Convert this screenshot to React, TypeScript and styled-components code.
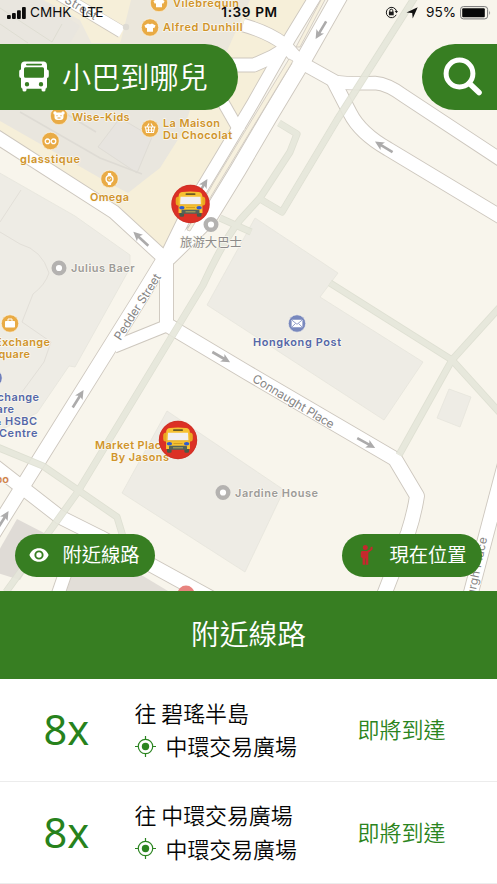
import React from "react";
import styled, { createGlobalStyle } from "styled-components";

const GREEN = "#377e22";
const CJK = `"Noto Sans CJK TC", "Noto Sans", sans-serif`;

const GlobalStyle = createGlobalStyle`
  *, *::before, *::after { box-sizing: border-box; }
  body { margin: 0; background: #fff; overflow: hidden; }
`;

const Screen = styled.main`
  width: 497px;
  height: 884px;
  display: flex;
  flex-direction: column;
  overflow: hidden;
  background: #fff;
  font-family: ${CJK};
`;

const MapArea = styled.section`
  position: relative;
  isolation: isolate;
  height: 591px;
  flex: none;
  display: flex;
  flex-direction: column;
  overflow: hidden;
  background: #f8f5ec;
`;

const MapCanvas = styled.svg`
  position: absolute;
  inset: 0;
  z-index: -1;
  width: 497px;
  height: 591px;
  font-family: Inter, "Noto Sans CJK TC", sans-serif;
`;

const StatusBar = styled.div`
  height: 25px;
  flex: none;
  display: grid;
  grid-template-columns: 1fr auto 1fr;
  align-items: center;
  padding: 0 5px 0 7px;
  color: #0c0c0c;
  font: 400 14px/25px Inter, sans-serif;
`;

const StatusGroup = styled.div<{ $end?: boolean }>`
  display: flex;
  align-items: center;
  justify-content: ${(p) => (p.$end ? "flex-end" : "flex-start")};
`;

const Carrier = styled.span`
  margin-left: 4px;
  font-size: 13.6px;
`;

const Network = styled.span`
  margin-left: 10px;
  font-size: 13.6px;
  letter-spacing: -0.7px;
`;

const Clock = styled.span`
  font-weight: 600;
  font-size: 13.6px;
  letter-spacing: 0.6px;
`;

const Percent = styled.span`
  margin: 0 4px 0 8px;
  font-size: 13.6px;
`;

const TopBar = styled.header`
  margin-top: 18.5px;
  height: 66.5px;
  display: flex;
  justify-content: space-between;
`;

const Brand = styled.h1`
  margin: 0;
  width: 237.5px;
  display: flex;
  align-items: center;
  gap: 13px;
  padding-left: 19px;
  border-radius: 0 34px 34px 0;
  background: ${GREEN};
  color: #fff;
  font-size: 29.2px;
  font-weight: 350;
  line-height: 1;
  white-space: nowrap;
`;

const BrandName = styled.span`
  padding-bottom: 3px;
`;

const SearchButton = styled.button`
  width: 75px;
  padding: 0 0 0 20px;
  display: flex;
  align-items: center;
  border: 0;
  border-radius: 34px 0 0 34px;
  background: ${GREEN};
`;

const MapActions = styled.div`
  margin-top: auto;
  margin-bottom: 14.5px;
  padding: 0 15px 0 14.5px;
  display: flex;
  justify-content: space-between;
`;

const ActionPill = styled.button<{ $gap: number }>`
  width: 140.5px;
  height: 43px;
  padding: 0 0 1px 14px;
  display: flex;
  align-items: center;
  gap: ${(p) => p.$gap}px;
  border: 0;
  border-radius: 22px;
  background: ${GREEN};
  color: #fff;
  font: 400 19.3px/1 ${CJK};
  white-space: nowrap;
`;

const PanelTitle = styled.h2`
  margin: 0;
  height: 88px;
  padding-bottom: 3px;
  flex: none;
  display: flex;
  align-items: center;
  justify-content: center;
  background: ${GREEN};
  color: #fff;
  font-size: 28.8px;
  font-weight: 350;
  line-height: 1;
`;

const RouteList = styled.ul`
  margin: 0;
  padding: 0;
  list-style: none;
`;

const RouteRow = styled.li`
  height: 102.5px;
  display: grid;
  grid-template-columns: 91px 223px 1fr;
  align-items: center;
  padding-left: 43.5px;
  border-bottom: 1.5px solid #ececec;
`;

const RouteNumber = styled.span`
  color: #27821c;
  font: 400 41.5px/60px "Noto Sans", sans-serif;
  padding-bottom: 1.5px;
`;

const RouteText = styled.div`
  font-size: 21.9px;
  font-weight: 350;
  line-height: 33.5px;
  color: #050505;
  white-space: nowrap;
  padding-bottom: 1px;
`;

const Stop = styled.div`
  display: flex;
  align-items: center;
  gap: 10px;
`;

const Arrival = styled.span`
  color: #2b8420;
  font-size: 22px;
  font-weight: 350;
  white-space: nowrap;
  padding-bottom: 3px;
`;

const ROADS: { d: string; w: number }[] = [
  { d: "M318 -8 L290 38 L253 103 L219 160 L187 213 L167 254", w: 11.5 },
  { d: "M342 -8 L304 59 L268.5 118 L238 170 L208 219 L168 258", w: 15.5 },
  { d: "M243 25 Q268 32 284 44 L300 62 L336 82 Q350 84 375 83 Q388 84 404 96 L501 160", w: 12.5 },
  { d: "M200 65 L254 65 L272 57 L290 46", w: 13 },
  { d: "M333 80 L350 113 Q360 133 388 149 L501 217", w: 13.5 },
  { d: "M200 62 L240 132", w: 11 },
  { d: "M-6 135 L114 212 L164 258", w: 13 },
  { d: "M166.5 256 V326", w: 13 },
  { d: "M164 259 L139 300 L41 457 L-12 542", w: 14 },
  { d: "M114 347 L166 326", w: 11.5 },
  { d: "M164 323 L247 372.5 L395 459 L417 496 Q414 515 408 533 L382 600", w: 14 },
  { d: "M507 456 L469 600", w: 14 },
  { d: "M-8 464 L60 517 L100 537 L215 600", w: 13.5 },
  { d: "M75 545 L56 600", w: 12.5 },
];

const PATHS: string[] = [
  "M415 -3 L337 120 L282 212 L260 199",
  "M279 123 L297 134 L290 152 L260 198 L240 220 Q222 243 203 285 L77 493 L6 592",
  "M220 218 L251 232",
  "M-3 447 L43 466 L117 517 L124 540",
  "M330 283 L452 360 L500 413",
  "M500 307 L452 360 L399 455",
];

const MapLabel = ({ x, y, w, color, children }: { x: number; y: number; w: number; color: string; children: string }) => (
  <text
    x={x} y={y} textLength={w} fill={color} fontSize="10.9" fontWeight="560"
    stroke="#fbf9f2" strokeWidth="1.4" strokeLinejoin="round" paintOrder="stroke"
  >
    {children}
  </text>
);

const ORANGE = "#d0942a";
const BLUE = "#5467a8";
const GREY = "#9d9b98";

const LABELS: [string, number, number, number, string][] = [
  ["Vilebrequin", 173, 6.5, 66, ORANGE],
  ["Alfred Dunhill", 163, 31, 79.5, ORANGE],
  ["Wise-Kids", 72, 120.5, 57.5, ORANGE],
  ["La Maison", 163, 127, 57, ORANGE],
  ["Du Chocolat", 163, 139, 69, ORANGE],
  ["glasstique", 20, 163, 60, ORANGE],
  ["Omega", 90, 200.5, 39, ORANGE],
  ["Julius Baer", 71, 272, 63.5, GREY],
  ["Exchange", -5, 345.5, 55, ORANGE],
  ["Square", -9, 357.5, 39, ORANGE],
  ["Exchange", -16, 400.5, 55, BLUE],
  ["Square", -25, 412.5, 39, BLUE],
  ["& HSBC", -6, 424.5, 43, BLUE],
  ["Centre", -1, 436.5, 38.5, BLUE],
  ["Market Place", 95, 448.5, 73, ORANGE],
  ["By Jasons", 111, 460.5, 58, ORANGE],
  ["Hongkong Post", 253, 345.5, 88, BLUE],
  ["Jardine House", 235, 497, 83, GREY],
  ["Pepo", -18, 483, 27, "#d0824a"],
];

const Poi = ({ x, y, fill = "#e9ab45", children }: { x: number; y: number; fill?: string; children?: React.ReactNode }) => (
  <g transform={`translate(${x} ${y})`}>
    <circle r="8.7" fill={fill} stroke="#fbf8ef" strokeWidth=".6" />
    {children}
  </g>
);

const Ring = ({ x, y }: { x: number; y: number }) => (
  <circle cx={x} cy={y} r="5.3" fill="#fff" stroke="#b4b2b0" strokeWidth="4.4" />
);

const Shirt = () => <path d="M-2 -4 Q0 -2.6 2 -4 L5.6 -2 4.2 .7 3 .2 V4.3 H-3 V.2 L-4.2 .7 -5.6 -2Z" fill="#fff" />;

const Arrow = ({ x, y, angle }: { x: number; y: number; angle: number }) => (
  <g transform={`translate(${x} ${y}) rotate(${angle})`}>
    <path d="M-10 -1.300 H3 L1.500 -4.400 L10.500 0 L1.500 4.400 L3 1.300 H-10Z" fill="#acabab" />
  </g>
);

const BusPin = ({ x, y }: { x: number; y: number }) => (
  <g transform={`translate(${x} ${y})`}>
    <circle r="19.2" fill="#dc3025" />
    <circle r="18.6" fill="none" stroke="#b8322a" strokeWidth=".8" opacity=".5" />
    <path d="M-14.800 -4.500 Q-14.800 -7.500 -11.500 -7.500 V1.500 H-13 Q-14.800 1 -14.800 -1Z M14.800 -4.500 Q14.800 -7.500 11.500 -7.500 V1.500 H13 Q14.800 1 14.800 -1Z" fill="#eaa821" />
    <rect x="-11" y="8" width="4.600" height="4.800" rx="1.400" fill="#4b5948" />
    <rect x="6.400" y="8" width="4.600" height="4.800" rx="1.400" fill="#4b5948" />
    <path d="M-11.800 -8.500 Q-11.300 -11.600 -8 -12 Q0 -13 8 -12 Q11.300 -11.600 11.800 -8.500 L12 9 H-12Z" fill="#f6c132" />
    <rect x="-5" y="-10.800" width="10" height="1.900" rx=".8" fill="#6b5a25" />
    <path d="M-10 -7.300 H10 L10.400 .6 H-10.400Z" fill="#f1eff2" />
    <path d="M-11.800 .8 H11.800" stroke="#e3a722" strokeWidth=".8" />
    <ellipse cx="-8.600" cy="3.700" rx="2.700" ry="1.700" fill="#2e5bd0" />
    <ellipse cx="8.600" cy="3.700" rx="2.700" ry="1.700" fill="#2e5bd0" />
    <path d="M-4.500 3.500 H4.500" stroke="#cf981f" strokeWidth=".9" />
    <rect x="-9" y="5.700" width="18" height="4" rx="1" fill="#54625a" />
    <path d="M-5 7.800 H5" stroke="#b0a55a" strokeWidth="1.100" />
  </g>
);

const CityMap = () => (
  <MapCanvas viewBox="0 0 497 591" aria-label="地圖">
    <path d="M0 0 H310 L246 105 L165 253 L117 208 L0 131Z" fill="#f6efd9" />
    <path d="M0 0 H44 L121 43 L0 43Z" fill="#ece8de" />
    <path d="M0 0 H42 L80 26 L70 43 H0Z" fill="#e9e6df" />
    <path d="M80 20 L122 40 V44 H92Z" fill="#f6efd9" />
    <path d="M0 43 H190 V110 L182 133 L160 168 L147 178 L128 193 L107 182 L0 121Z" fill="#e9e6de" />
    <path d="M131 0 H250 L222 62 H112 L121 40Z" fill="#ebe7dc" />
    <path d="M120 118 L152 137 L137 173 L98 147Z" fill="#e7e4df" stroke="#dfdcd5" />
    <path d="M20 112 L100 158 L142 174 M60 110 L96 132" fill="none" stroke="#dedbd4" strokeWidth="1.5" />
    <path d="M0 24 L28 43 M0 8 L52 42 M52 42 L62 24" fill="none" stroke="#deddd2" strokeWidth="1" />

    <g fill="#eeece5" stroke="#e6e4dc" strokeWidth=".8">
      <path d="M-2 172 L75 216 L130 255 V268 L75 367 L69 366 L37 413 L-2 431Z" />
      <path d="M255 218 L338 273 L320 297 L423 362 L384 420 L207 305Z" />
      <path d="M167 411 L284 490 L245 572 L122 493Z" />
      <path d="M449 389 L471 397 L460 427 L437 418Z" />
    </g>
    <path d="M21 190 L0 222 M0 232 L20 244 Q42 250 49 273 Q45 285 33 294 L22 322 L51 342 L44 362 L22 392" fill="none" stroke="#e2dfd8" />
    <path d="M17 519 L48 535 L20 580 L-2 573 V552Z" fill="#dfdbd6" />
    <path d="M72 573 H138 L168 591 H62Z" fill="#e2ded8" />

    <g fill="none" strokeLinejoin="round">
      {ROADS.map((r) => <path key={r.d} d={r.d} stroke="#cdc7be" strokeWidth={r.w + 1.8} />)}
      <path d="M50 -11 L121.500 32" stroke="#cdc7be" strokeWidth="13" />
      <path d="M50 -11 L122 32" stroke="#fff" strokeWidth="11.500" />
      {ROADS.map((r) => <path key={r.d} d={r.d} stroke="#fff" strokeWidth={r.w} />)}
    </g>
    <path d="M326 -2 L300 47 L296 47 L322 -2Z M289 59 L293 61 L190 231 L187 230 L214 182Z" fill="#f7f1df" stroke="#cdc7be" strokeWidth=".8" />

    <g fill="none" strokeLinejoin="round" opacity=".9">
      {PATHS.map((d) => <path key={d} d={d} stroke="#dcded0" strokeWidth="7.2" />)}
      {PATHS.map((d) => <path key={d} d={d} stroke="#e6e7db" strokeWidth="5.6" />)}
    </g>
    <circle cx="126" cy="27" r="3.200" fill="#dedbd3" />

    <Arrow x={321} y={30} angle={121} />
    <Arrow x={384} y={147} angle={211} />
    <Arrow x={141} y={239} angle={223} />
    <Arrow x={202} y={188} angle={-59} />
    <Arrow x={78} y={399} angle={-58} />
    <Arrow x={221} y={357} angle={30} />
    <Arrow x={366} y={443} angle={29} />
    <Arrow x={3} y={520} angle={-58} />

    <g fill="#858483" fontSize="11.8" fontWeight="400" stroke="#fff" strokeWidth="1.6" paintOrder="stroke">
      <text transform="translate(120.500 341) rotate(-57.500)" textLength="76">Pedder Street</text>
      <text transform="translate(251.500 381) rotate(31)" textLength="93">Connaught Place</text>
      <text transform="translate(29 -19) rotate(31)" textLength="76">Voeux Street</text>
      <text transform="translate(468 628) rotate(-78)" textLength="92">Edinburgh Place</text>
    </g>

    <Poi x={159} y={3}><Shirt /></Poi>
    <Poi x={150} y={27.5}><Shirt /></Poi>
    <Poi x={59} y={116}>
      <rect x="-4.500" y="-3.500" width="9" height="7.500" rx="3" fill="#fff" />
      <circle cx="-4" cy="-3" r="1.700" fill="#fff" /><circle cx="4" cy="-3" r="1.700" fill="#fff" />
      <path d="M-2 -.8 v1 M2 -.8 v1 M-1.500 2 h3" stroke="#e0a23b" />
    </Poi>
    <Poi x={150} y={128.5}>
      <path d="M-5.500 -1.500 H5.500 M-4.500 -1 L-3.500 4 H3.500 L4.500 -1 M-3 -1.500 L-1 -5 M3 -1.500 L1 -5 M-4 1.500 H4 M-1.500 -1 V4 M1.500 -1 V4" fill="none" stroke="#fff" strokeWidth="1.100" />
    </Poi>
    <Poi x={50.5} y={141}>
      <g fill="none" stroke="#fff" strokeWidth="1.300"><circle cx="-3" cy=".3" r="2.300" /><circle cx="3" cy=".3" r="2.300" /></g>
    </Poi>
    <Poi x={109.5} y={179}>
      <path d="M-2 -3 L-1.500 -6 H1.500 L2 -3 M-2 3 L-1.500 6 H1.500 L2 3" fill="#fff" />
      <circle r="3.400" fill="none" stroke="#fff" strokeWidth="1.400" />
      <path d="M-1.200 0 L0 1 L1.600 -1.200" fill="none" stroke="#fff" strokeWidth=".8" />
    </Poi>
    <Poi x={10} y={323.5}>
      <rect x="-5" y="-2.500" width="10" height="6.500" rx=".8" fill="#fff" />
      <path d="M-2 -2.500 V-4.500 H2 V-2.500" fill="none" stroke="#fff" />
    </Poi>
    <Poi x={-6.5} y={378} fill="#6f7fbb" />
    <Poi x={297} y={323.5} fill="#7888bd">
      <rect x="-5.400" y="-3.800" width="10.800" height="7.600" rx=".6" fill="#fff" />
      <path d="M-5 -3.300 L0 .8 L5 -3.300 M-5 3.400 L-1.500 0 M5 3.400 L1.500 0" fill="none" stroke="#7888bd" strokeWidth=".8" />
    </Poi>
    <circle cx="186" cy="594" r="8.500" fill="#e8847f" />
    <Ring x={211} y={224.5} />
    <Ring x={59} y={268} />
    <Ring x={223} y={492.5} />

    {LABELS.map(([t, x, y, w, c]) => <MapLabel key={`${t}${y}`} x={x} y={y} w={w} color={c}>{t}</MapLabel>)}
    <text x="180" y="247" fontSize="12.400" fill="#8d8b89" stroke="#fbf9f2" strokeWidth="1.400" paintOrder="stroke">旅游大巴士</text>

    <BusPin x={190.5} y={204} />
    <BusPin x={178} y={440} />
  </MapCanvas>
);

const SignalIcon = () => (
  <svg width="19" height="12" viewBox="0 0 19 12" fill="#0c0c0c">
    <rect x="0" y="8" width="3.800" height="4" rx="1" /><rect x="5" y="6" width="3.800" height="6" rx="1" />
    <rect x="10" y="3.300" width="3.800" height="8.700" rx="1" /><rect x="15" y="0" width="3.800" height="12" rx="1" />
  </svg>
);

const LockIcon = () => (
  <svg width="13" height="13" viewBox="0 0 13 13" fill="none" stroke="#1a1a1a">
    <path d="M11.200 8.800 A5.200 5.200 0 1 1 11.500 5" />
    <path d="M9.700 4.900 H13 L11.500 7.200Z" fill="#1a1a1a" stroke="none" />
    <rect x="3.900" y="5.700" width="4.800" height="3.600" fill="#1a1a1a" stroke="none" />
    <path d="M4.800 6 V4.700 A1.500 1.500 0 0 1 7.800 4.700 V6" />
  </svg>
);

const LocationIcon = () => (
  <svg width="12" height="12" viewBox="0 0 12 12">
    <path d="M11.700 .3 L6.700 11.500 L6.200 6 L.5 5.500Z" fill="#111" />
  </svg>
);

const BatteryIcon = () => (
  <svg width="32" height="14" viewBox="0 0 32 14">
    <rect x=".6" y=".6" width="27" height="12.300" rx="2.800" fill="none" stroke="#777" strokeWidth="1" />
    <rect x="2.200" y="2.200" width="22.600" height="9.100" rx="1" fill="#080808" />
    <path d="M29.200 4.500 Q31 6.700 29.200 9Z" fill="#888" />
  </svg>
);

const BusIcon = () => (
  <svg width="30" height="31" viewBox="0 0 30 31">
    <path
      fill="#fff" fillRule="evenodd"
      d="M5 .5 H25 Q28 1 28 4.500 V8.500 Q29.800 8.700 29.800 10.500 V15 Q29.800 17 28 17 V25.500 Q28 27.500 26.500 27.800 V29 Q26.500 30.500 24.700 30.500 Q22.500 30.500 22.500 29 V27.800 H7.500 V29 Q7.500 30.500 5.300 30.500 Q3.500 30.500 3.500 29 V27.800 Q2 27.500 2 25.500 V17 Q.2 17 .2 15 V10.500 Q.2 8.700 2 8.500 V4.500 Q2 1 5 .5Z M8 2.800 Q7 2.800 7 3.600 T8 4.500 H22 Q23 4.500 23 3.600 T22 2.800Z M6.500 6.300 Q5 6.300 5 7.800 V15.200 Q5 16.700 6.500 16.700 H23.500 Q25 16.700 25 15.200 V7.800 Q25 6.300 23.500 6.300Z M8 21 A2.200 2.200 0 1 0 8 25.400 A2.200 2.200 0 1 0 8 21Z M22 21 A2.200 2.200 0 1 0 22 25.400 A2.200 2.200 0 1 0 22 21Z"
    />
  </svg>
);

const SearchIcon = () => (
  <svg width="42" height="42" viewBox="0 0 42 42" fill="none" stroke="#fff" strokeLinecap="round">
    <circle cx="17.500" cy="17.500" r="13.400" strokeWidth="5" />
    <path d="M27.500 27.500 L37 36.500" strokeWidth="5.600" />
  </svg>
);

const EyeIcon = () => (
  <svg width="20" height="14" viewBox="0 0 20 14">
    <path fill="#fff" fillRule="evenodd" d="M10 .2 C14.500 .2 18 2.900 19.600 7 C18 11.100 14.500 13.800 10 13.800 C5.500 13.800 2 11.100 .4 7 C2 2.900 5.500 .2 10 .2Z M10 2.400 A4.600 4.600 0 1 0 10 11.600 A4.600 4.600 0 1 0 10 2.400Z" />
    <circle cx="10" cy="7" r="2.700" fill="#fff" />
  </svg>
);

const PersonIcon = () => (
  <svg width="20" height="22" viewBox="0 0 20 22">
    <g fill="#c5282d">
      <circle cx="9.300" cy="3.600" r="2.500" />
      <path d="M6 7 H11 L14.500 5 V3.200 L16.500 2.500 V5.500 L12.300 8.800 V20.800 H9.900 V14.500 H9.300 V20.800 H6.600 V14 L4.800 13.300 V8.500 Q5 7 6 7Z" />
    </g>
  </svg>
);

const TargetIcon = () => (
  <svg width="21" height="21" viewBox="0 0 21 21" fill="none" stroke="#2b8420">
    <circle cx="10.500" cy="10.500" r="7.200" strokeWidth="1.200" />
    <circle cx="10.500" cy="10.500" r="3.700" fill="#2b8420" stroke="none" />
    <path d="M10.500 0 V3.500 M10.500 17.500 V21 M0 10.500 H3.500 M17.500 10.500 H21" strokeWidth="1.200" />
  </svg>
);

const routes = [
  { id: 1, number: "8x", destination: "碧瑤半島", stop: "中環交易廣場", arrival: "即將到達" },
  { id: 2, number: "8x", destination: "中環交易廣場", stop: "中環交易廣場", arrival: "即將到達" },
];

const LocationSlot = styled.span`
  display: flex;
  margin-left: 8px;
`;

export default function App() {
  return (
    <Screen>
      <GlobalStyle />
      <MapArea>
        <CityMap />
        <StatusBar>
          <StatusGroup>
            <SignalIcon />
            <Carrier>CMHK</Carrier>
            <Network>LTE</Network>
          </StatusGroup>
          <Clock>1:39 PM</Clock>
          <StatusGroup $end>
            <LockIcon />
            <LocationSlot><LocationIcon /></LocationSlot>
            <Percent>95%</Percent>
            <BatteryIcon />
          </StatusGroup>
        </StatusBar>
        <TopBar>
          <Brand><BusIcon /><BrandName>小巴到哪兒</BrandName></Brand>
          <SearchButton aria-label="搜尋"><SearchIcon /></SearchButton>
        </TopBar>
        <MapActions>
          <ActionPill $gap={14}><EyeIcon />附近線路</ActionPill>
          <ActionPill $gap={14}><PersonIcon />現在位置</ActionPill>
        </MapActions>
      </MapArea>
      <PanelTitle>附近線路</PanelTitle>
      <RouteList>
        {routes.map((r) => (
          <RouteRow key={r.id}>
            <RouteNumber>{r.number}</RouteNumber>
            <RouteText>
              <div>往 {r.destination}</div>
              <Stop><TargetIcon />{r.stop}</Stop>
            </RouteText>
            <Arrival>{r.arrival}</Arrival>
          </RouteRow>
        ))}
      </RouteList>
    </Screen>
  );
}
